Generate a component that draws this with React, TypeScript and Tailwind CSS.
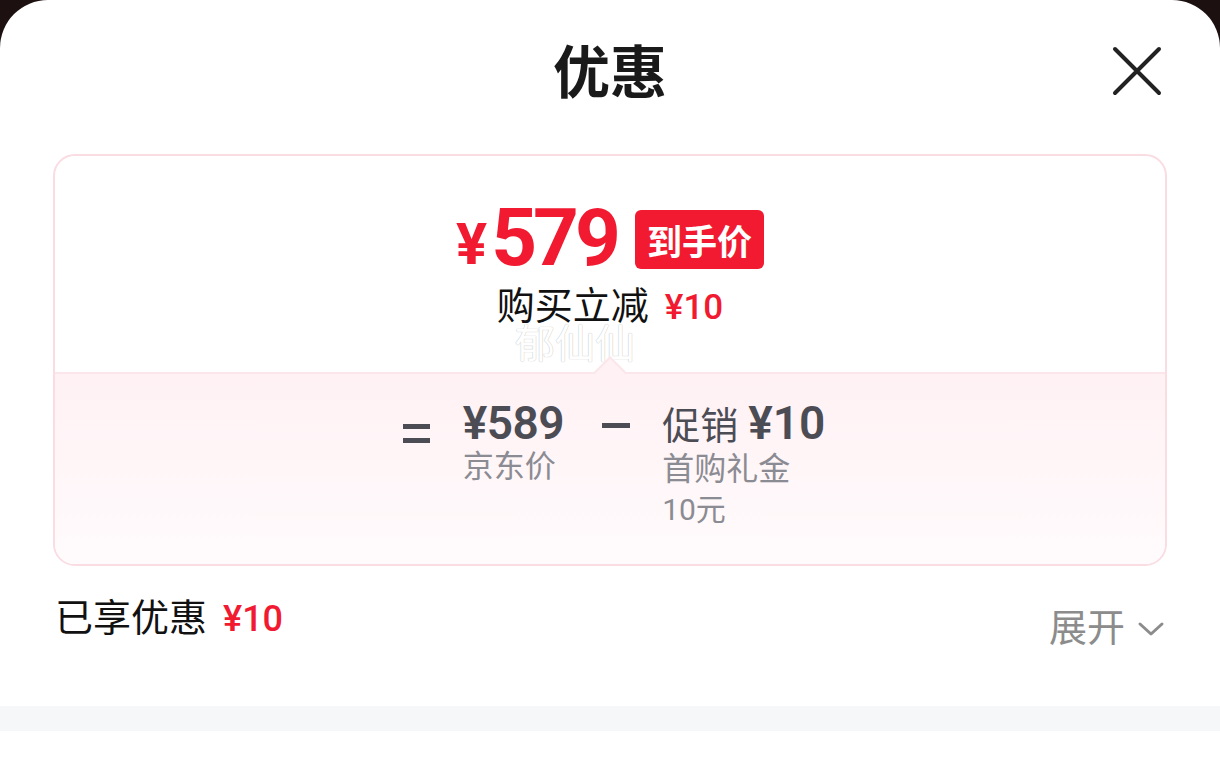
import * as React from "react";

const cjk = "font-['Noto_Sans_CJK_SC','Noto_Sans',sans-serif]";
const num = "font-['Roboto','Noto_Sans_CJK_SC',sans-serif]";

export default function App() {
  return (
    <div className={`w-[1220px] h-[770px] bg-[#1c1010] overflow-hidden ${cjk}`}>
      <div className="h-full bg-white rounded-t-[48px] flex flex-col">
        {/* header */}
        <div className="h-[154px] grid grid-cols-[1fr_auto_1fr] items-start pt-[40px] px-[58px]">
          <div />
          <h1 className="text-[57px] leading-none font-bold text-[#1a1a1a]">优惠</h1>
          <div className="flex justify-end pt-[6px]">
            <CloseIcon />
          </div>
        </div>

        {/* summary card */}
        <div className="mx-[53px] h-[412px] border-2 border-[#fadce3] rounded-[22px] overflow-hidden flex flex-col">
          <div className="h-[216px] flex flex-col items-center pt-[42px]">
            <div className="flex items-center">
              <span className={`${num} text-[58px] leading-none font-bold text-[#f11a30] mt-[12px]`}>¥</span>
              <span className={`${num} text-[80px] leading-none font-bold text-[#f11a30] ml-[4px] tracking-[-4px]`}>579</span>
              <span className="ml-[18px] mt-[2px] h-[59px] px-[12px] rounded-[6px] bg-[#f11a30] text-white text-[35px] font-bold leading-none flex items-center">
                到手价
              </span>
            </div>
            <div className="flex items-baseline mt-[6px]">
              <span className="text-[38px] leading-none text-[#111]">购买立减</span>
              <span className={`${num} text-[35px] leading-none font-medium text-[#f11a30] ml-[16px]`}>¥10</span>
            </div>
            <div className="text-[40px] leading-none text-white [text-shadow:0_0_1px_#c8c8c8,0_0_1px_#c8c8c8] mt-[-4px] ml-[-70px]">郁仙仙</div>
          </div>

          <div className="relative flex-1 border-t-2 border-[#fbe6eb] bg-gradient-to-b from-[#fff1f4] to-[#fffbfc]">
            <div className="absolute left-[543px] top-[-13px] w-[24px] h-[24px] rotate-45 bg-[#fff1f4] border-t-2 border-l-2 border-[#fbe6eb]" />
            <div className="flex justify-center items-start pt-[26px] pl-[8px]">
              <div className="flex flex-col gap-[9px] mt-[24px]">
                <div className="w-[27px] h-[5px] bg-[#4c4c55]" />
                <div className="w-[27px] h-[5px] bg-[#4c4c55]" />
              </div>
              <div className="flex flex-col ml-[33px]">
                <span className={`${num} text-[46px] leading-none font-semibold text-[#4c4c55] tracking-[-0.5px]`}>¥589</span>
                <span className="text-[31px] leading-none text-[#8b8b93] mt-[2px]">京东价</span>
              </div>
              <div className="w-[28px] h-[5px] bg-[#4c4c55] mt-[23px] ml-[38px]" />
              <div className="flex flex-col ml-[32px]">
                <div className="flex items-baseline">
                  <span className="text-[38px] leading-none text-[#4c4c55]">促销</span>
                  <span className={`${num} text-[46px] leading-none font-semibold text-[#4c4c55] ml-[10px]`}>¥10</span>
                </div>
                <span className="text-[32px] leading-none text-[#8b8b93] mt-[4px]">首购礼金</span>
                <span className={`${num} text-[30px] leading-none text-[#8b8b93] mt-[10px]`}>10<span className={cjk}>元</span></span>
              </div>
            </div>
          </div>
        </div>

        {/* totals row */}
        <div className="flex justify-between items-start px-[55px] pt-[30px] h-[140px]">
          <div className="flex items-baseline">
            <span className="text-[38px] leading-none text-[#111]">已享优惠</span>
            <span className={`${num} text-[36px] leading-none font-medium text-[#f11a30] ml-[16px]`}>¥10</span>
          </div>
          <div className="flex items-center mt-[10px] text-[#8c8c8c]">
            <span className="text-[38px] leading-none">展开</span>
            <ChevronDown />
          </div>
        </div>

        <div className="h-[25px] bg-[#f6f7f9]" />
        <div className="flex-1 bg-white" />
      </div>
    </div>
  );
}

function CloseIcon() {
  return (
    <svg width="50" height="50" viewBox="0 0 50 50" fill="none">
      <path d="M3 3 L47 47 M47 3 L3 47" stroke="#222" strokeWidth="4" strokeLinecap="round" />
    </svg>
  );
}

function ChevronDown() {
  return (
    <svg width="28" height="18" viewBox="0 0 28 18" fill="none" className="ml-[12px] mt-[8px]">
      <path d="M3 4 L14 14 L25 4" stroke="#8c8c8c" strokeWidth="3" strokeLinecap="round" strokeLinejoin="round" />
    </svg>
  );
}
